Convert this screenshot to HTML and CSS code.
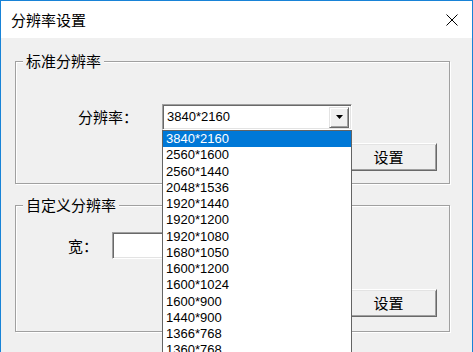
FILE: index.html
```html
<!DOCTYPE html>
<html>
<head>
<meta charset="utf-8">
<link rel="stylesheet" href="styles.css">
</head>
<body>
<div class="window">
  <div class="titlebar">
    <span class="title">分辨率设置</span>
    <svg class="close" width="12" height="12" viewBox="0 0 12 12"><path d="M0.5 0.5L11.5 11.5M11.5 0.5L0.5 11.5" stroke="#000" stroke-width="1" fill="none"/></svg>
  </div>
  <div class="content">
    <fieldset class="group group-std">
      <legend class="legend">标准分辨率</legend>
      <div class="row row-combo">
        <span class="label label-res">分辨率：</span>
        <div class="combo">
          <span class="combo-value">3840*2160</span>
          <span class="combo-btn"><svg width="7" height="4" viewBox="0 0 7 4"><polygon points="0,0 7,0 3.5,4" fill="#000"/></svg></span>
          <ul class="dropdown">
            <li class="item selected">3840*2160</li>
            <li class="item">2560*1600</li>
            <li class="item">2560*1440</li>
            <li class="item">2048*1536</li>
            <li class="item">1920*1440</li>
            <li class="item">1920*1200</li>
            <li class="item">1920*1080</li>
            <li class="item">1680*1050</li>
            <li class="item">1600*1200</li>
            <li class="item">1600*1024</li>
            <li class="item">1600*900</li>
            <li class="item">1440*900</li>
            <li class="item">1366*768</li>
            <li class="item">1360*768</li>
          </ul>
        </div>
      </div>
      <div class="row row-btn btn-std"><button class="btn">设置</button></div>
    </fieldset>
    <fieldset class="group group-custom">
      <legend class="legend">自定义分辨率</legend>
      <div class="row row-input">
        <span class="label label-w">宽：</span>
        <div class="textbox"></div>
      </div>
      <div class="row row-btn btn-custom"><button class="btn">设置</button></div>
    </fieldset>
  </div>
</div>
</body>
</html>
```
FILE: styles.css
```css
* { box-sizing: border-box; }
html, body { margin: 0; padding: 0; }
body {
  width: 473px;
  height: 352px;
  overflow: hidden;
  background: #f0f0f0;
  font-family: "Noto Sans CJK SC", "Liberation Sans", sans-serif;
  color: #000;
}
.window {
  width: 473px;
  height: 360px;
  border: 1px solid #1883d7;
  border-bottom: none;
  background: #f0f0f0;
}
.titlebar {
  height: 37px;
  background: #fff;
  display: flex;
  align-items: center;
  justify-content: space-between;
  padding: 1px 14px 0 10px;
}
.title {
  font-size: 15px;
  line-height: 18px;
}
.close { display: block; }
.content {
  padding: 0 22px 0 14px;
}
.group {
  margin: 14px 0 0 0;
  padding: 0;
  border: 1px solid #a0a0a0;
  box-shadow: 1px 1px 0 #fff, inset 1px 1px 0 #fff;
  min-width: 0;
}
.group-custom { margin-top: 12px; }
.legend {
  margin-left: 7px;
  padding: 0 3px;
  font-size: 15px;
  line-height: 18px;
  background: #f0f0f0;
}
.row { display: flex; align-items: center; }
.label { font-size: 15px; line-height: 18px; }
.row-combo { margin-top: 34px; padding-left: 62px; gap: 24px; }
.row-input { margin-top: 18px; padding-left: 52px; gap: 14px; }
.row-btn { justify-content: flex-end; padding-right: 12px; }
.btn-std { margin-top: 13px; padding-bottom: 12px; }
.btn-custom { margin-top: 30px; padding-bottom: 14px; }
.combo {
  position: relative;
  width: 190px;
  height: 26px;
  background: #fff;
  border: 1px solid;
  border-color: #a0a0a0 #fff #fff #a0a0a0;
  box-shadow: inset 1px 1px 0 #696969, inset -1px -1px 0 #e3e3e3;
  display: flex;
  align-items: center;
  justify-content: space-between;
  padding: 2px 2px 2px 4px;
}
.combo-value {
  font-family: "Liberation Sans", sans-serif;
  font-size: 13px;
  line-height: 16px;
}
.combo-btn {
  width: 20px;
  height: 21px;
  background: #f0f0f0;
  border: 1px solid;
  border-color: #e3e3e3 #696969 #696969 #e3e3e3;
  box-shadow: inset 1px 1px 0 #fff, inset -1px -1px 0 #a0a0a0;
  display: flex;
  align-items: center;
  justify-content: center;
}
.combo-btn svg { display: block; }
.dropdown {
  position: absolute;
  z-index: 10;
  left: -1px;
  top: 25px;
  width: 190px;
  margin: 0;
  padding: 0;
  list-style: none;
  background: #fff;
  border: 1px solid #646464;
}
.item {
  font-family: "Liberation Sans", sans-serif;
  font-size: 13px;
  height: 16.25px;
  line-height: 16px;
  padding-left: 3px;
  color: #000;
}
.item.selected {
  background: #0078d7;
  color: #fff;
}
.textbox {
  width: 170px;
  height: 27px;
  background: #fff;
  border: 1px solid;
  border-color: #a0a0a0 #fff #fff #a0a0a0;
  box-shadow: inset 1px 1px 0 #696969, inset -1px -1px 0 #e3e3e3;
}
.btn {
  width: 97px;
  height: 28px;
  padding: 0;
  background: #f0f0f0;
  border: 1px solid;
  border-color: #fff #696969 #696969 #fff;
  box-shadow: inset 1px 1px 0 #e3e3e3, inset -1px -1px 0 #a0a0a0;
  font-family: "Noto Sans CJK SC", sans-serif;
  font-size: 15px;
  line-height: 18px;
  color: #000;
}
```
